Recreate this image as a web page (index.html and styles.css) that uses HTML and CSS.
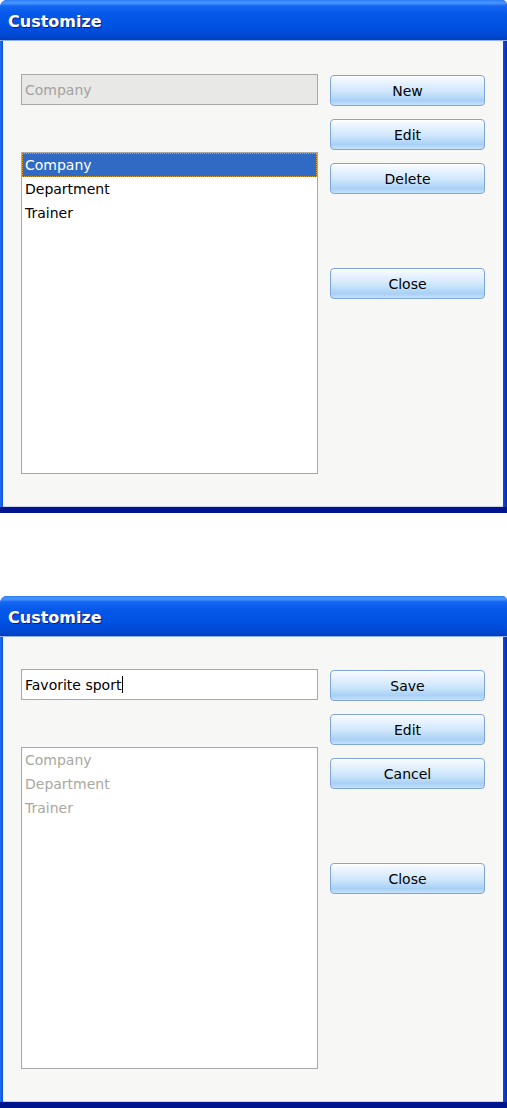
FILE: index.html
```html
<!DOCTYPE html>
<html lang="en">

<head>
    <meta charset="UTF-8">
    <meta name="viewport" content="width=device-width, initial-scale=1.0">
    <title>Customize</title>
    <link rel="stylesheet" href="styles.css">
</head>

<body>
    <div class="window">
        <div class="titlebar">Customize</div>
        <div class="client">
            <div class="fields">
                <div class="field disabled">Company</div>
                <ul class="list">
                    <li class="selected">Company</li>
                    <li>Department</li>
                    <li>Trainer</li>
                </ul>
            </div>
            <div class="buttons">
                <button class="btn">New</button>
                <button class="btn">Edit</button>
                <button class="btn">Delete</button>
                <button class="btn close">Close</button>
            </div>
        </div>
    </div>

    <div class="window second">
        <div class="titlebar">Customize</div>
        <div class="client">
            <div class="fields">
                <div class="field">Favorite sport<span class="caret"></span></div>
                <ul class="list disabled">
                    <li>Company</li>
                    <li>Department</li>
                    <li>Trainer</li>
                </ul>
            </div>
            <div class="buttons">
                <button class="btn">Save</button>
                <button class="btn">Edit</button>
                <button class="btn">Cancel</button>
                <button class="btn close">Close</button>
            </div>
        </div>
    </div>
</body>

</html>
```

FILE: styles.css
```css
body {
    margin: 0;
    padding: 0;
    background-color: #fff;
    font-family: "DejaVu Sans", Verdana, sans-serif;
    font-size: 14px;
    color: #000;
}

.window {
    width: 507px;
    height: 513px;
    display: flex;
    flex-direction: column;
    box-sizing: border-box;
    border-radius: 7px 5px 0 0;
    background: linear-gradient(to right, #2272f0 0, #0a4fe0 3px, #0a4fe0 calc(100% - 4px), #0a28b4 100%);
    padding: 0 4px 6px 3px;
    box-shadow: inset 0 -6px 0 #00148e;
}

.window.second {
    margin-top: 83px;
    height: 512px;
}

.titlebar {
    height: 41px;
    margin: 0 -4px 0 -3px;
    border-radius: 7px 5px 0 0;
    padding-left: 8px;
    box-sizing: border-box;
    display: flex;
    align-items: center;
    padding-top: 2px;
    font-weight: bold;
    font-size: 16px;
    color: #fff;
    text-shadow: 1px 1px 0 #0a1e8c;
    background: linear-gradient(to bottom, #2f7ffa 0, #4a96fc 3px, #1466f2 6px, #0558e8 14px, #0052e2 26px, #004ad6 34px, #003fc4 40px, #8fb0e8 40px, #8fb0e8 41px);
}

.client {
    flex: 1;
    background-color: #f7f7f6;
    display: flex;
    padding: 33px 0 0 18px;
    gap: 12px;
    border-bottom: 1px solid #c8d4ec;
}

.second .client {
    padding-top: 32px;
}

.fields {
    width: 297px;
    display: flex;
    flex-direction: column;
}

.field {
    height: 31px;
    box-sizing: border-box;
    border: 1px solid #a8a8a8;
    background-color: #fff;
    padding-left: 3px;
    display: flex;
    align-items: center;
}

.field.disabled {
    background-color: #e8e8e6;
    color: #a2a2a0;
}

.caret {
    display: inline-block;
    width: 1px;
    height: 17px;
    margin-left: 1px;
    background-color: #000;
}

.list {
    list-style-type: none;
    margin: 47px 0 0 0;
    padding: 0;
    height: 322px;
    box-sizing: border-box;
    border: 1px solid #a8a8a8;
    background-color: #fff;
}

.list li {
    height: 24px;
    line-height: 24px;
    padding-left: 3px;
}

.list li.selected {
    background-color: #316ac5;
    color: #fff;
    outline: 1px dotted #d8a040;
    outline-offset: -1px;
}

.list.disabled li {
    color: #a8a8a0;
}

.buttons {
    display: flex;
    flex-direction: column;
    gap: 13px;
    padding-top: 1px;
}

.btn {
    width: 155px;
    height: 31px;
    border: 1px solid #7fa6dc;
    border-radius: 4px;
    font-family: inherit;
    font-size: 14px;
    color: #000;
    padding: 0;
    background: linear-gradient(to bottom, #fafdff 0%, #e6f2fe 25%, #cde6fc 55%, #a8d0f5 85%, #c6e2fb 100%);
    box-shadow: inset 0 1px 0 #fff;
    cursor: pointer;
}

.btn.close {
    margin-top: 61px;
}
```
